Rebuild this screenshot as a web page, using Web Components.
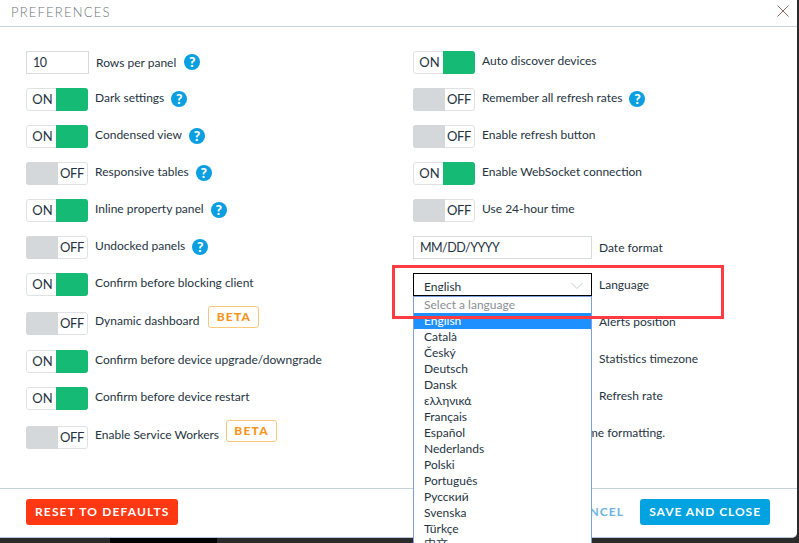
<!DOCTYPE html>
<html lang="en">
<head>
<meta charset="utf-8">
<title>Preferences</title>
<style>
  html, body { margin: 0; height: 100%; overflow: hidden; }
  body {
    font-family: Lato, "Liberation Sans", sans-serif;
    background: linear-gradient(90deg, #2b2b2b 110px, #000 110px, #000 217px, #2b2b2b 217px);
  }
</style>
</head>
<body>
<pref-dialog>
  <span slot="title">PREFERENCES</span>

  <pref-row slot="left"><pref-input value="10" width="63"></pref-input><span>Rows per panel</span><help-icon style="margin-left:1px"></help-icon></pref-row>
  <pref-row slot="left"><pref-toggle on></pref-toggle><span>Dark settings</span><help-icon></help-icon></pref-row>
  <pref-row slot="left"><pref-toggle on></pref-toggle><span>Condensed view</span><help-icon></help-icon></pref-row>
  <pref-row slot="left"><pref-toggle></pref-toggle><span>Responsive tables</span><help-icon></help-icon></pref-row>
  <pref-row slot="left"><pref-toggle on></pref-toggle><span>Inline property panel</span><help-icon></help-icon></pref-row>
  <pref-row slot="left"><pref-toggle></pref-toggle><span>Undocked panels</span><help-icon></help-icon></pref-row>
  <pref-row slot="left"><pref-toggle on></pref-toggle><span>Confirm before blocking client</span></pref-row>
  <pref-row slot="left" tall><pref-toggle></pref-toggle><span>Dynamic dashboard</span><beta-badge style="margin-left:2px"></beta-badge></pref-row>
  <pref-row slot="left"><pref-toggle on></pref-toggle><span>Confirm before device upgrade/downgrade</span></pref-row>
  <pref-row slot="left"><pref-toggle on></pref-toggle><span>Confirm before device restart</span></pref-row>
  <pref-row slot="left" tall><pref-toggle></pref-toggle><span>Enable Service Workers</span><beta-badge></beta-badge></pref-row>

  <pref-row slot="right"><pref-toggle on></pref-toggle><span>Auto discover devices</span></pref-row>
  <pref-row slot="right"><pref-toggle></pref-toggle><span>Remember all refresh rates</span><help-icon></help-icon></pref-row>
  <pref-row slot="right"><pref-toggle></pref-toggle><span>Enable refresh button</span></pref-row>
  <pref-row slot="right"><pref-toggle on></pref-toggle><span>Enable WebSocket connection</span></pref-row>
  <pref-row slot="right"><pref-toggle></pref-toggle><span>Use 24-hour time</span></pref-row>
  <pref-row slot="right"><pref-input value="MM/DD/YYYY" width="179"></pref-input><span>Date format</span></pref-row>
  <pref-row slot="right"><lang-select></lang-select><span>Language</span></pref-row>
  <pref-row slot="right"><pref-input width="179"></pref-input><span>Alerts position</span></pref-row>
  <pref-row slot="right"><pref-input width="179"></pref-input><span>Statistics timezone</span></pref-row>
  <pref-row slot="right"><pref-input width="179"></pref-input><span>Refresh rate</span></pref-row>
  <pref-row slot="right"><pref-input width="168"></pref-input><span>me formatting.</span></pref-row>

  <pref-button slot="footer-left" kind="reset">RESET TO DEFAULTS</pref-button>
  <pref-button slot="footer-right" kind="link">CANCEL</pref-button>
  <pref-button slot="footer-right" kind="save">SAVE AND CLOSE</pref-button>
</pref-dialog>

<script>
const dialogTemplate = document.createElement('template');
dialogTemplate.innerHTML = `
  <style>
    :host {
      display: flex;
      flex-direction: column;
      position: relative;
      width: 797px;
      height: 538px;
      box-sizing: border-box;
      background: #fff;
      color: #26343f;
      font: 12px Lato, "Liberation Sans", sans-serif;
      border-bottom: 1px solid #b4c6dc;
      border-radius: 0 0 5px 0;
    }
    header {
      flex: none;
      height: 26px;
      display: flex;
      align-items: center;
      justify-content: space-between;
      padding: 0 8px 0 11px;
      border-bottom: 1px solid #c8d4dc;
    }
    .title {
      font-size: 13px;
      font-weight: 300;
      letter-spacing: 1.2px;
      color: #6e7478;
      margin-top: -3px;
    }
    .close {
      display: block;
      width: 12px;
      height: 12px;
      margin-top: -5px;
    }
    main {
      flex: 1;
      display: grid;
      grid-template-columns: 413px 1fr;
      padding-top: 24px;
      min-height: 0;
    }
    .col {
      display: flex;
      flex-direction: column;
      gap: 14px;
      align-items: flex-start;
    }
    .col.left { padding-left: 26px; }
    footer {
      flex: none;
      height: 46px;
      display: flex;
      align-items: center;
      justify-content: space-between;
      padding: 0 27px 2px 26px;
      border-top: 1px solid #c8d4dc;
    }
    .actions {
      display: flex;
      align-items: center;
      gap: 16px;
    }
  </style>
  <header>
    <span class="title"><slot name="title"></slot></span>
    <svg class="close" viewBox="0 0 12 12" fill="none" stroke="#8c6a60" stroke-width="1">
      <path d="M.5.5l11 11M11.500.5l-11 11"/>
    </svg>
  </header>
  <main>
    <div class="col left"><slot name="left"></slot></div>
    <div class="col right"><slot name="right"></slot></div>
  </main>
  <footer>
    <slot name="footer-left"></slot>
    <div class="actions"><slot name="footer-right"></slot></div>
  </footer>
  <annotation-box></annotation-box>
`;

class PrefDialog extends HTMLElement {
  constructor() {
    super();
    this.attachShadow({mode: 'open'}).append(dialogTemplate.content.cloneNode(true));
  }
}

const rowTemplate = document.createElement('template');
rowTemplate.innerHTML = `
  <style>
    :host {
      display: flex;
      align-items: center;
      height: 23px;
      gap: 7px;
      white-space: nowrap;
      font-size: 12px;
      line-height: 18px;
    }
    :host([tall]) { height: 26px; }
    :host([switch]) ::slotted(span) { margin-bottom: 4px; }
    ::slotted(help-icon) { margin-bottom: 2px; }
  </style>
  <slot></slot>
`;

class PrefRow extends HTMLElement {
  constructor() {
    super();
    this.attachShadow({mode: 'open'}).append(rowTemplate.content.cloneNode(true));
  }

  connectedCallback() {
    // labels beside a switch sit a little higher than labels beside an input
    if (this.querySelector('pref-toggle')) {
      this.setAttribute('switch', '');
    }
  }
}

class PrefToggle extends HTMLElement {
  constructor() {
    super();
    this.attachShadow({mode: 'open'});
  }

  connectedCallback() {
    const on = this.hasAttribute('on');
    this.shadowRoot.innerHTML = `
      <style>
        :host {
          display: flex;
          flex: none;
          width: 62px;
          height: 23px;
          box-sizing: border-box;
          border: 1px solid #dfe2e4;
          border-radius: 3px;
          background: #fff;
          font-size: 13px;
          line-height: 21px;
          color: #26343f;
        }
        .text { flex: 1; text-align: center; letter-spacing: -.3px; }
        .on { padding-left: 1px; letter-spacing: 0; }
        .knob { width: 32px; margin: -1px; border-radius: 0 3px 3px 0; background: #15bb74; }
        .knob.off { background: #d5d8da; border-radius: 3px 0 0 3px; }
      </style>
      ${on
        ? '<span class="text on">ON</span><span class="knob"></span>'
        : '<span class="knob off"></span><span class="text">OFF</span>'}
    `;
  }
}

class PrefInput extends HTMLElement {
  constructor() {
    super();
    this.attachShadow({mode: 'open'});
  }

  connectedCallback() {
    this.shadowRoot.innerHTML = `
      <style>
        :host {
          display: block;
          flex: none;
          height: 23px;
          box-sizing: border-box;
          width: ${this.getAttribute('width')}px;
          border: 1px solid #d8dcdf;
          padding-left: 6px;
          font-size: 12.5px;
          letter-spacing: -.55px;
          line-height: 22px;
        }
      </style>
      ${this.getAttribute('value') || ''}
    `;
  }
}

const helpTemplate = document.createElement('template');
helpTemplate.innerHTML = `
  <style>
    :host {
      display: block;
      flex: none;
      width: 16px;
      height: 16px;
      border-radius: 50%;
      background: #0a9fe0;
      color: #fff;
      font-size: 14px;
      font-weight: 900;
      line-height: 16px;
      text-align: center;
    }
  </style>
  ?
`;

class HelpIcon extends HTMLElement {
  constructor() {
    super();
    this.attachShadow({mode: 'open'}).append(helpTemplate.content.cloneNode(true));
  }
}

const betaTemplate = document.createElement('template');
betaTemplate.innerHTML = `
  <style>
    :host {
      display: block;
      flex: none;
      box-sizing: border-box;
      width: 51px;
      height: 22px;
      margin-top: -12px;
      border: 1px solid #fbc77a;
      border-radius: 3px;
      color: #f7941d;
      font-size: 12px;
      font-weight: 900;
      letter-spacing: 1.2px;
      line-height: 20px;
      text-align: center;
    }
  </style>
  BETA
`;

class BetaBadge extends HTMLElement {
  constructor() {
    super();
    this.attachShadow({mode: 'open'}).append(betaTemplate.content.cloneNode(true));
  }
}

class PrefButton extends HTMLElement {
  constructor() {
    super();
    this.attachShadow({mode: 'open'});
  }

  connectedCallback() {
    const looks = {
      reset: {bg: '#ff3814', fg: '#fff', pad: '9px', spacing: '1.14px'},
      save: {bg: '#00a3e0', fg: '#fff', pad: '9px', spacing: '.95px'},
      link: {bg: 'transparent', fg: '#6db4e2', pad: '0', spacing: '1.1px'}
    };
    const look = looks[this.getAttribute('kind')];
    this.shadowRoot.innerHTML = `
      <style>
        :host {
          display: block;
          height: 26px;
          padding: 0 ${look.pad};
          border-radius: 3px;
          background: ${look.bg};
          color: ${look.fg};
          font-size: 12px;
          font-weight: 700;
          letter-spacing: ${look.spacing};
          line-height: 25px;
          white-space: nowrap;
        }
      </style>
      <slot></slot>
    `;
  }
}

const languages = ['English', 'Català', 'Český', 'Deutsch', 'Dansk', 'ελληνικά', 'Français', 'Español',
  'Nederlands', 'Polski', 'Português', 'Русский', 'Svenska', 'Türkçe', '中文'];

class LangSelect extends HTMLElement {
  constructor() {
    super();
    this.attachShadow({mode: 'open'});
  }

  connectedCallback() {
    const items = languages.map((name, i) => `<li class="${i === 0 ? 'selected' : ''}">${name}</li>`).join('');
    this.shadowRoot.innerHTML = `
      <style>
        :host {
          display: block;
          position: relative;
          flex: none;
          width: 179px;
          height: 23px;
          font-family: Lato, "Noto Sans CJK SC", sans-serif;
        }
        .box {
          height: 23px;
          box-sizing: border-box;
          border: 1px solid #000;
          padding: 5px 0 0 10px;
          font-size: 12px;
          line-height: 16px;
          position: relative;
        }
        .value { display: block; height: 12px; overflow: hidden; }
        .box svg { position: absolute; right: 8px; top: 8px; }
        .menu {
          position: absolute;
          z-index: 2;
          top: 23px;
          left: 0;
          width: 100%;
          height: 300px;
          box-sizing: border-box;
          border: 1px solid #7f9fdc;
          background: #fff;
          font-size: 12px;
          line-height: 16px;
        }
        .search { height: 16px; padding-left: 10px; color: #8a8f94; }
        ul { list-style: none; margin: 0; padding: 0; }
        li { height: 16px; padding-left: 10px; }
        li.selected { background: #1e90ff; color: #fff; }
      </style>
      <div class="box">
        <span class="value">English</span>
        <svg width="12" height="8" viewBox="0 0 12 8" fill="none" stroke="#c6ccd1" stroke-width="1"><path d="M.5 1l5.500 5.500L11.500 1"/></svg>
      </div>
      <div class="menu">
        <div class="search">Select a language</div>
        <ul>${items}</ul>
      </div>
    `;
  }
}

const annotationTemplate = document.createElement('template');
annotationTemplate.innerHTML = `
  <style>
    :host {
      display: block;
      position: absolute;
      z-index: 5;
      left: 392px;
      top: 265px;
      width: 332px;
      height: 54px;
      box-sizing: border-box;
      border: 3px solid #fc3b42;
      pointer-events: none;
    }
  </style>
`;

class AnnotationBox extends HTMLElement {
  constructor() {
    super();
    this.attachShadow({mode: 'open'}).append(annotationTemplate.content.cloneNode(true));
  }
}

window.customElements.define('annotation-box', AnnotationBox);
window.customElements.define('pref-row', PrefRow);
window.customElements.define('pref-toggle', PrefToggle);
window.customElements.define('pref-input', PrefInput);
window.customElements.define('help-icon', HelpIcon);
window.customElements.define('beta-badge', BetaBadge);
window.customElements.define('pref-button', PrefButton);
window.customElements.define('lang-select', LangSelect);
window.customElements.define('pref-dialog', PrefDialog);
</script>
</body>
</html>
